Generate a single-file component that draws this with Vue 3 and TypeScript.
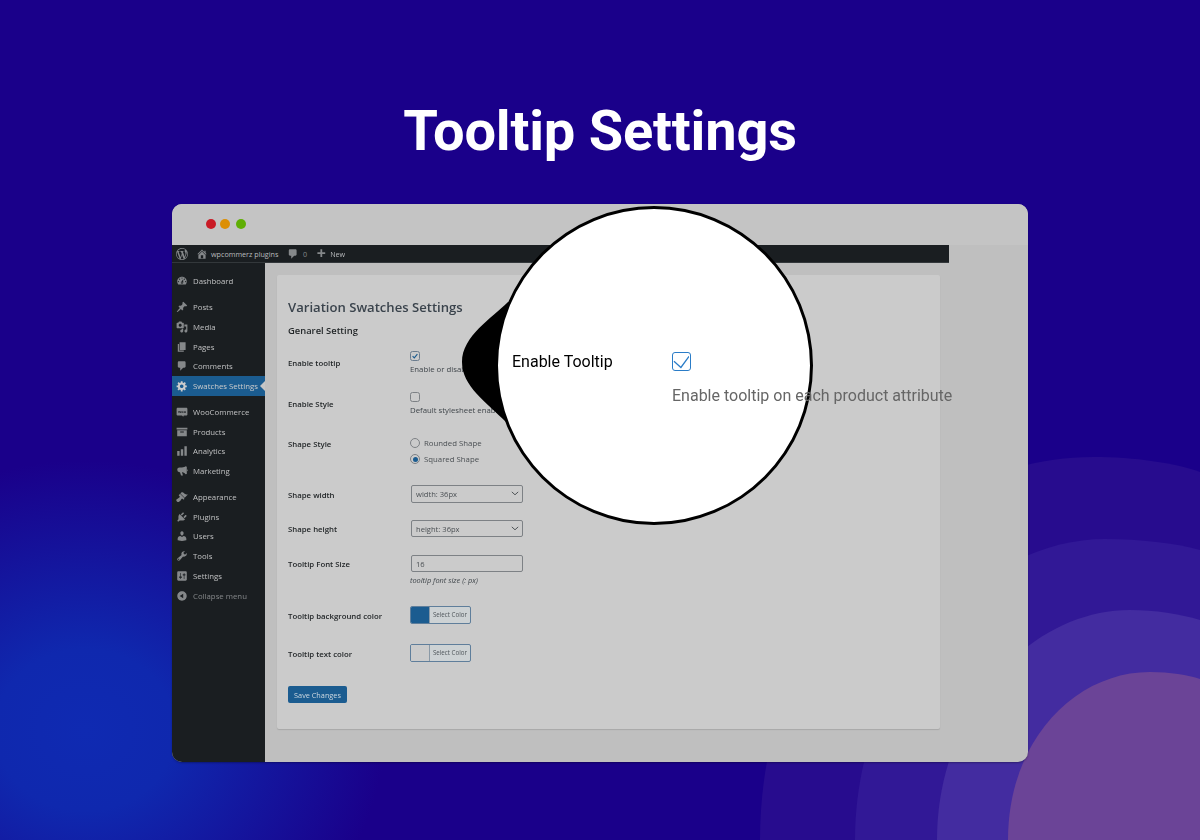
<script setup lang="ts">
interface MenuItem {
  label: string
  icon: string
  gap?: boolean
  active?: boolean
  muted?: boolean
}

const icons: Record<string, string> = {
  wp: 'M20 10c0-5.51-4.49-10-10-10C4.48 0 0 4.49 0 10c0 5.52 4.48 10 10 10 5.51 0 10-4.48 10-10zM7.78 15.37L4.37 6.22c.55-.02 1.17-.08 1.17-.08.5-.06.44-1.13-.06-1.11 0 0-1.45.11-2.37.11-.18 0-.37 0-.58-.01C4.12 2.69 6.87 1.11 10 1.11c2.33 0 4.45.87 6.05 2.34-.68-.11-1.65.39-1.65 1.58 0 .74.45 1.36.9 2.1.35.61.55 1.36.55 2.46 0 1.49-1.4 5-1.4 5l-3.03-8.37c.54-.02.82-.17.82-.17.5-.05.44-1.25-.06-1.22 0 0-1.44.12-2.38.12-.87 0-2.33-.12-2.33-.12-.5-.03-.56 1.2-.06 1.22l.92.08 1.26 3.41zM17.41 10c.24-.64.74-1.87.43-4.25.7 1.29 1.05 2.71 1.05 4.25 0 3.29-1.73 6.24-4.4 7.78.97-2.59 1.94-5.2 2.92-7.78zM6.1 18.09C3.12 16.65 1.11 13.53 1.11 10c0-1.3.23-2.48.72-3.59C3.25 10.3 4.67 14.2 6.1 18.09zm4.03-6.63l2.58 6.98c-.86.29-1.76.45-2.71.45-.79 0-1.57-.11-2.29-.33.81-2.38 1.62-4.74 2.42-7.1z',
  home: 'M16 8.5l1.53 1.53-1.06 1.06L10 4.62l-6.47 6.47-1.06-1.06L10 2.5l4 4v-2h2v4zm-6-2.46l6 5.99V18H4v-5.97zM12 17v-5H8v5h4z',
  plus: 'M17 7v3h-5v5H9v-5H4V7h5V2h3v5h5z',
  dashboard: 'M3.76 16h12.48c1.1-1.37 1.76-3.11 1.76-5 0-4.42-3.58-8-8-8s-8 3.58-8 8c0 1.89.66 3.63 1.76 5zM10 4c.55 0 1 .45 1 1s-.45 1-1 1-1-.45-1-1 .45-1 1-1zM6 6c.55 0 1 .45 1 1s-.45 1-1 1-1-.45-1-1 .45-1 1-1zm8 0c.55 0 1 .45 1 1s-.45 1-1 1-1-.45-1-1 .45-1 1-1zm-5.37 5.55L12 7v6c0 1.1-.9 2-2 2s-2-.9-2-2c0-.57.24-1.08.63-1.45zM4 10c.55 0 1 .45 1 1s-.45 1-1 1-1-.45-1-1 .45-1 1-1zm12 0c.55 0 1 .45 1 1s-.45 1-1 1-1-.45-1-1 .45-1 1-1zm-5 3c0-.55-.45-1-1-1s-1 .45-1 1 .45 1 1 1 1-.45 1-1z',
  pin: 'M10.44 3.02l1.82-1.82 6.36 6.35-1.83 1.82c-1.05-.68-2.48-.57-3.41.36l-.75.75c-.92.93-1.04 2.35-.35 3.41l-1.83 1.82-2.41-2.41-2.8 2.79c-.42.42-3.38 2.71-3.8 2.29s1.86-3.39 2.28-3.81l2.79-2.79L4.1 9.36l1.83-1.82c1.05.69 2.48.57 3.4-.36l.75-.75c.93-.92 1.05-2.35.36-3.41z',
  media: 'M13 11V4c0-.55-.45-1-1-1h-1.67L9 1H5L3.67 3H2c-.55 0-1 .45-1 1v7c0 .55.45 1 1 1h10c.55 0 1-.45 1-1zM7 4.5c1.38 0 2.5 1.12 2.5 2.5S8.38 9.5 7 9.5 4.5 8.38 4.5 7 5.62 4.5 7 4.5zM14 6h5v10.5c0 1.38-1.12 2.5-2.5 2.5S14 17.88 14 16.5s1.12-2.5 2.5-2.5c.17 0 .34.02.5.05V9h-3V6zm-4 8.05V13h2v3.5c0 1.38-1.12 2.5-2.5 2.5S7 17.88 7 16.5 8.12 14 9.5 14c.17 0 .34.02.5.05z',
  pages: 'M6 15V2h10v13H6zm-1 1h8v2H3V5h2v11z',
  comment: 'M5 2h9c1.1 0 2 .9 2 2v7c0 1.1-.9 2-2 2h-2l-5 5v-5H5c-1.1 0-2-.9-2-2V4c0-1.1.9-2 2-2z',
  gear: 'M18 12h-2.18c-.17.7-.44 1.35-.81 1.93l1.54 1.54-2.1 2.1-1.54-1.54c-.58.36-1.23.63-1.91.79V19H8v-2.18c-.68-.16-1.33-.43-1.91-.79l-1.54 1.54-2.12-2.12 1.54-1.54c-.36-.58-.63-1.23-.79-1.91H1V9.03h2.17c.16-.7.44-1.35.8-1.94L2.43 5.55l2.1-2.1 1.54 1.54c.58-.37 1.24-.64 1.93-.81V2h3v2.18c.68.16 1.33.43 1.91.79l1.54-1.54 2.12 2.12-1.54 1.54c.36.59.64 1.24.8 1.94H18V12zm-8.5 1.5c1.66 0 3-1.34 3-3s-1.34-3-3-3-3 1.34-3 3 1.34 3 3 3z',
  woo: 'M3 3h14c1.1 0 2 .9 2 2v9c0 1.1-.9 2-2 2h-4l-1 2-2-2H3c-1.1 0-2-.9-2-2V5c0-1.1.9-2 2-2z',
  products: 'M19 3H1v3h18V3zM2 7h16v10H2V7zm5 2v2h6V9H7z',
  analytics: 'M18 18V2h-4v16h4zm-6 0V7H8v11h4zm-6 0v-8H2v8h4z',
  marketing: 'M18 3v12l-2 .6C14 12.8 12 12 10 12l1.6 5.5H8.4L6.6 12H6a4 4 0 0 1 0-8h4c2.4 0 5-1 6-2zM18.5 7a2 2 0 0 1 0 3.6z',
  appearance: 'M14.48 11.06L7.41 3.99l1.5-1.5c.5-.56 2.3-.47 3.51.32 1.21.8 1.43 1.28 2.91 2.1 1.18.64 2.45 1.26 4.45.85zm-.71.71L6.7 4.7 4.93 6.47c-.39.39-.39 1.02 0 1.41l1.06 1.06c.39.39.39 1.03 0 1.42-.6.6-1.43 1.11-2.21 1.69-.35.26-.7.53-1.01.84C1.43 13.23.5 14.4.5 15.5c0 1.5 2 3 3 3 1.1 0 2.27-.93 3.61-2.27.31-.31.58-.66.84-1.01.58-.78 1.09-1.61 1.69-2.21.39-.39 1.03-.39 1.42 0l1.06 1.06c.39.39 1.02.39 1.41 0z',
  plugins: 'M13.11 4.36L9.87 7.6 8 5.73l3.24-3.24c.35-.34 1.05-.2 1.56.32.52.51.66 1.21.31 1.55zm-8 1.77l.91-1.12 9.01 9.01-1.19.84c-.71.71-2.63 1.16-3.82 1.16H6.14L4.9 17.26c-.59.59-1.54.59-2.12 0-.59-.58-.59-1.53 0-2.12l1.24-1.24v-3.88c0-1.13.4-3.19 1.09-3.89zm7.26 3.97l3.24-3.24c.34-.35 1.04-.21 1.55.31.52.51.66 1.21.31 1.55l-3.24 3.25z',
  users: 'M10 9.25c-2.27 0-2.73-3.44-2.73-3.44C7 4.02 7.82 2 9.97 2c2.16 0 2.98 2.02 2.71 3.81 0 0-.41 3.44-2.68 3.44zm0 2.57L12.72 10c2.39 0 4.52 2.33 4.52 4.53v2.49s-3.65 1.13-7.24 1.13c-3.65 0-7.24-1.13-7.24-1.13v-2.49c0-2.25 1.94-4.48 4.47-4.48z',
  tools: 'M16.68 9.77c-1.34 1.34-3.3 1.67-4.95.99l-5.41 6.52c-.99.99-2.59.99-3.58 0s-.99-2.59 0-3.57l6.52-5.42c-.68-1.65-.35-3.61.99-4.95 1.28-1.28 3.12-1.62 4.72-1.06l-2.89 2.89 2.82 2.82 2.86-2.87c.53 1.58.18 3.39-1.08 4.65zM3.81 16.21c.4.39 1.04.39 1.43 0 .4-.4.4-1.04 0-1.43-.39-.4-1.03-.4-1.43 0-.39.39-.39 1.03 0 1.43z',
  settings: 'M18 16V4c0-1.1-.9-2-2-2H4c-1.1 0-2 .9-2 2v12c0 1.1.9 2 2 2h12c1.1 0 2-.9 2-2zM8 11h1c.55 0 1 .45 1 1s-.45 1-1 1H8v1.5c0 .28-.22.5-.5.5s-.5-.22-.5-.5V13H6c-.55 0-1-.45-1-1s.45-1 1-1h1V5.5c0-.28.22-.5.5-.5s.5.22.5.5V11zm5-2h-1c-.55 0-1-.45-1-1s.45-1 1-1h1V5.5c0-.28.22-.5.5-.5s.5.22.5.5V7h1c.55 0 1 .45 1 1s-.45 1-1 1h-1v5.5c0 .28-.22.5-.5.5s-.5-.22-.5-.5V9z',
  collapse: 'M10 2.16c4.33 0 7.84 3.51 7.84 7.84s-3.51 7.84-7.84 7.84S2.16 14.33 2.16 10 5.71 2.16 10 2.16zm2 11.72V6.12L6.18 9.97z'
}

const menu: MenuItem[] = [
  { label: 'Dashboard', icon: 'dashboard' },
  { label: 'Posts', icon: 'pin', gap: true },
  { label: 'Media', icon: 'media' },
  { label: 'Pages', icon: 'pages' },
  { label: 'Comments', icon: 'comment' },
  { label: 'Swatches Settings', icon: 'gear', active: true },
  { label: 'WooCommerce', icon: 'woo', gap: true },
  { label: 'Products', icon: 'products' },
  { label: 'Analytics', icon: 'analytics' },
  { label: 'Marketing', icon: 'marketing' },
  { label: 'Appearance', icon: 'appearance', gap: true },
  { label: 'Plugins', icon: 'plugins' },
  { label: 'Users', icon: 'users' },
  { label: 'Tools', icon: 'tools' },
  { label: 'Settings', icon: 'settings' },
  { label: 'Collapse menu', icon: 'collapse', muted: true }
]
</script>

<template>
  <div class="page">
    <svg class="blobs" viewBox="0 0 1200 840" aria-hidden="true">
      <path fill="#270c8e" d="M760 840C760 620 920 457 1093 457C1135 457 1175 463 1200 472V840Z" />
      <path fill="#311896" d="M855 840C855 670 980 539 1105 539C1140 539 1175 543 1200 550V840Z" />
      <path fill="#432ca0" d="M937 840C937 710 1030 610 1130 610C1155 610 1180 614 1200 620V840Z" />
      <path fill="#6b4497" d="M1008 840C1008 740 1075 672 1150 672C1170 672 1188 675 1200 679V840Z" />
    </svg>

    <h1 class="title">Tooltip Settings</h1>

    <div class="window">
      <div class="titlebar">
        <span class="dot dot-red"></span>
        <span class="dot dot-amber"></span>
        <span class="dot dot-green"></span>
      </div>

      <div class="shot">
        <div class="adminbar">
          <svg class="bar-logo" viewBox="0 0 20 20"><path :d="icons.wp" fill-rule="evenodd" /></svg>
          <svg class="bar-icon bar-home" viewBox="0 0 20 20"><path :d="icons.home" /></svg>
          <span class="bar-site">wpcommerz plugins</span>
          <svg class="bar-icon bar-comment" viewBox="0 0 20 20"><path :d="icons.comment" /></svg>
          <span class="bar-count">0</span>
          <svg class="bar-icon bar-plus" viewBox="0 0 20 20"><path :d="icons.plus" /></svg>
          <span class="bar-new">New</span>
        </div>

        <div class="admin-body">
          <nav class="sidebar">
            <div
              v-for="item in menu"
              :key="item.label"
              class="menu-item"
              :class="{ 'has-gap': item.gap, active: item.active, muted: item.muted }"
            >
              <svg class="menu-icon" viewBox="0 0 20 20" fill-rule="evenodd">
                <path :d="icons[item.icon]" />
                <text v-if="item.icon === 'woo'" x="10" y="12" class="woo-text">woo</text>
              </svg>
              <span>{{ item.label }}</span>
            </div>
          </nav>

          <main class="content">
            <section class="card">
              <h2 class="card-title">Variation Swatches Settings</h2>
              <h3 class="card-sub">Genarel Setting</h3>

              <div class="row row-check-a">
                <label class="row-label">Enable tooltip</label>
                <div class="control">
                  <span class="check on">
                    <svg viewBox="0 0 10 10"><path d="M2 5.2l2.1 2.2L8 2.6" /></svg>
                  </span>
                  <p class="desc">Enable or disable tooltip on each product attribute</p>
                </div>
              </div>

              <div class="row row-check-b">
                <label class="row-label">Enable Style</label>
                <div class="control">
                  <span class="check"></span>
                  <p class="desc">Default stylesheet enabled for swatches</p>
                </div>
              </div>

              <div class="row row-radio">
                <label class="row-label">Shape Style</label>
                <div class="control control-radio">
                  <div class="radio-line"><span class="radio"></span>Rounded Shape</div>
                  <div class="radio-line"><span class="radio on"></span>Squared Shape</div>
                </div>
              </div>

              <div class="row row-select-a">
                <label class="row-label">Shape width</label>
                <div class="field">
                  width: 36px
                  <svg class="chev" viewBox="0 0 10 6"><path d="M1 1l4 3.6L9 1" /></svg>
                </div>
              </div>

              <div class="row row-select-b">
                <label class="row-label">Shape height</label>
                <div class="field">
                  height: 36px
                  <svg class="chev" viewBox="0 0 10 6"><path d="M1 1l4 3.6L9 1" /></svg>
                </div>
              </div>

              <div class="row row-input">
                <label class="row-label">Tooltip Font Size</label>
                <div class="control-input">
                  <div class="field">16</div>
                  <p class="hint">tooltip font size (: px)</p>
                </div>
              </div>

              <div class="row row-color-a">
                <label class="row-label">Tooltip background color</label>
                <div class="picker">
                  <span class="swatch swatch-blue"></span>
                  <span class="picker-text">Select Color</span>
                </div>
              </div>

              <div class="row row-color-b">
                <label class="row-label">Tooltip text color</label>
                <div class="picker">
                  <span class="swatch"></span>
                  <span class="picker-text">Select Color</span>
                </div>
              </div>

              <button class="save" type="button">Save Changes</button>
            </section>
          </main>
        </div>
      </div>

      <svg class="tail" viewBox="0 0 60 130" aria-hidden="true">
        <path d="M46 0C30 16 0 34 0 60C0 84 24 100 44 120L60 120V0Z" />
      </svg>
      <div class="lens">
        <span class="lens-label">Enable Tooltip</span>
        <span class="lens-check">
          <svg viewBox="0 0 17 17"><path d="M1 8.5l7.2 6.5L16.6 3.5" /></svg>
        </span>
      </div>
      <p class="lens-desc">Enable tooltip on each product attribute</p>
    </div>
  </div>
</template>

<style>
html,
body {
  margin: 0;
  background: #1a008a;
}
</style>

<style scoped>
.page {
  position: relative;
  width: 1200px;
  height: 840px;
  overflow: hidden;
  display: flex;
  flex-direction: column;
  align-items: center;
  background: radial-gradient(ellipse 300px 270px at 85px 730px, #0f2ab2 0%, #0f28ae 30%, #1a008a 100%);
  font-family: Roboto, sans-serif;
}

.blobs {
  position: absolute;
  inset: 0;
  width: 1200px;
  height: 840px;
}

.title {
  position: relative;
  margin: 95px 0 0;
  height: 73px;
  font-size: 56px;
  line-height: 73px;
  font-weight: 700;
  letter-spacing: -0.2px;
  color: #fff;
}

.window {
  position: relative;
  margin-top: 36px;
  width: 856px;
  height: 558px;
  border-radius: 10px;
  overflow: hidden;
  background: #bfbfbf;
  box-shadow: 0 1px 2px rgba(0, 0, 0, 0.3);
  flex: none;
}

.titlebar {
  height: 41px;
  box-sizing: border-box;
  padding: 0 0 1px 34px;
  display: flex;
  align-items: center;
  gap: 4px;
  background: #c4c4c4;
}

.dot {
  width: 10px;
  height: 10px;
  border-radius: 50%;
}

.dot-red {
  background: #c91b26;
}

.dot-amber {
  background: #dc8f04;
}

.dot-green {
  margin-left: 2px;
  background: #5fae04;
}

.shot {
  width: 777px;
  font-family: 'Open Sans', sans-serif;
  filter: blur(0.35px);
}

.adminbar {
  height: 18px;
  display: flex;
  align-items: center;
  background: #1a1e21;
  box-shadow: inset 0 -1px 0 #33383b;
  color: #b8babc;
  font-size: 7.2px;
  white-space: nowrap;
}

.bar-logo {
  margin-left: 4px;
  width: 12px;
  height: 12px;
  fill: #85888a;
}

.bar-icon {
  width: 12px;
  height: 12px;
  fill: #85888a;
}

.bar-home {
  margin-left: 8px;
}

.bar-site {
  margin-left: 3px;
  width: 69px;
}

.bar-comment {
  margin-left: 7px;
}

.bar-count {
  margin-left: 4px;
  color: #85888a;
}

.bar-plus {
  margin-left: 8px;
}

.bar-new {
  margin-left: 3px;
}

.admin-body {
  display: flex;
  height: 499px;
  width: 856px;
}

.sidebar {
  width: 93px;
  flex: none;
  padding-top: 8.5px;
  box-sizing: border-box;
  background: #1a1e21;
}

.menu-item {
  position: relative;
  height: 19.75px;
  display: flex;
  align-items: center;
  padding-left: 4px;
  gap: 5px;
  font-size: 7.8px;
  color: #c0c1c2;
  white-space: nowrap;
}

.menu-item.has-gap {
  margin-top: 6px;
}

.menu-item.active {
  background: #1b5c90;
  color: #cccccc;
}

.menu-item.active::after {
  content: '';
  position: absolute;
  right: 0;
  top: 5px;
  border: 5px solid transparent;
  border-right-color: #c6c6c6;
  border-left-width: 0;
}

.menu-item.muted {
  color: #85888a;
}

.menu-icon {
  width: 12px;
  height: 12px;
  flex: none;
  fill: #85888a;
}

.active .menu-icon {
  fill: #cccccc;
}

.woo-text {
  font-size: 6.5px;
  font-weight: 700;
  text-anchor: middle;
  fill: #1a1e21;
}

.content {
  flex: none;
  width: 763px;
  padding: 12px 88px 0 12px;
  box-sizing: border-box;
}

.card {
  width: 663px;
  height: 454px;
  padding: 23px 11px 0;
  box-sizing: border-box;
  background: #cbcbcb;
  border-radius: 2px;
  box-shadow: 0 1px 1px rgba(0, 0, 0, 0.12);
  color: #2c3338;
}

.card-title {
  margin: 0;
  height: 18px;
  font-size: 13.1px;
  line-height: 18px;
  font-weight: 600;
  color: #3a434c;
  white-space: nowrap;
}

.card-sub {
  margin: 8px 0 0;
  height: 14px;
  font-size: 9.4px;
  line-height: 14px;
  font-weight: 600;
  color: #232729;
  white-space: nowrap;
}

.row {
  display: flex;
  align-items: flex-start;
}

.row-check-a {
  margin-top: 12px;
  height: 41px;
}

.row-check-b {
  height: 40px;
}

.row-radio {
  height: 51px;
}

.row-select-a {
  height: 34px;
}

.row-select-b {
  height: 35px;
}

.row-input {
  height: 52px;
}

.row-color-a {
  height: 38px;
}

.row-color-b {
  height: 45px;
}

.row-label {
  width: 122px;
  flex: none;
  padding-top: 6px;
  font-size: 7.8px;
  line-height: 14px;
  font-weight: 600;
  color: #232729;
  white-space: nowrap;
}

.control {
  padding-top: 1px;
}

.check {
  display: block;
  width: 10px;
  height: 10px;
  box-sizing: border-box;
  border: 1px solid #7d8185;
  border-radius: 2.5px;
}

.check.on {
  border-color: #6b7c8e;
}

.check svg {
  display: block;
  width: 8px;
  height: 8px;
  fill: none;
  stroke: #1b5c90;
  stroke-width: 1.4;
}

.desc {
  margin: 3px 0 0;
  font-size: 7.8px;
  line-height: 11px;
  color: #3f454a;
  white-space: nowrap;
}

.control-radio {
  padding-top: 4px;
}

.radio-line {
  height: 16px;
  display: flex;
  align-items: center;
  gap: 4px;
  font-size: 7.8px;
  color: #4a4f53;
  white-space: nowrap;
}

.radio {
  width: 10px;
  height: 10px;
  box-sizing: border-box;
  border: 1px solid #7d8185;
  border-radius: 50%;
  display: flex;
  align-items: center;
  justify-content: center;
}

.radio.on::before {
  content: '';
  width: 5px;
  height: 5px;
  border-radius: 50%;
  background: #1b5c90;
}

.field {
  position: relative;
  width: 112px;
  height: 18px;
  margin: 3px 0 0 1px;
  padding-left: 4px;
  box-sizing: border-box;
  display: flex;
  align-items: center;
  border: 1px solid #7d8185;
  border-radius: 2px;
  font-size: 7.6px;
  color: #4a4f53;
}

.row-select-b .field {
  margin-top: 4px;
  height: 17px;
}

.chev {
  position: absolute;
  right: 3px;
  top: 5px;
  width: 8px;
  height: 5px;
  fill: none;
  stroke: #4a4f53;
  stroke-width: 1.2;
}

.control-input .field {
  margin-top: 4px;
  height: 17px;
}

.hint {
  margin: 3px 0 0 0;
  font-size: 7.4px;
  line-height: 11px;
  font-style: italic;
  color: #3f454a;
  white-space: nowrap;
}

.picker {
  width: 61px;
  height: 18px;
  margin-top: 3px;
  box-sizing: border-box;
  display: flex;
  align-items: stretch;
  border: 1px solid #5f7e9b;
  border-radius: 2px;
  overflow: hidden;
  background: #cdd2d4;
}

.swatch {
  width: 18px;
  background: #cbcbcb;
  border-right: 1px solid #8a99a6;
}

.swatch-blue {
  background: #1b5c90;
}

.picker-text {
  flex: 1;
  text-align: center;
  font-size: 6.2px;
  line-height: 16px;
  color: #50565b;
  white-space: nowrap;
}

.save {
  display: block;
  width: 59px;
  height: 17px;
  padding: 0;
  border: 0;
  border-radius: 2px;
  background: #1b5c90;
  color: #cdd8e0;
  font-family: inherit;
  font-size: 7.3px;
}

.tail {
  position: absolute;
  left: 290px;
  top: 98px;
  width: 60px;
  height: 130px;
  fill: #000;
}

.lens {
  position: absolute;
  left: 323px;
  top: 2px;
  width: 318px;
  height: 319px;
  box-sizing: border-box;
  border: 3px solid #000;
  border-radius: 50%;
  background: #fff;
}

.lens-label {
  position: absolute;
  left: 14px;
  top: 143px;
  font-size: 16px;
  line-height: 20px;
  color: #000;
}

.lens-check {
  position: absolute;
  left: 174px;
  top: 143px;
  width: 19px;
  height: 19px;
  box-sizing: border-box;
  border: 1.3px solid #2a7cc7;
  border-radius: 3px;
}

.lens-check svg {
  display: block;
  width: 16.4px;
  height: 16.4px;
  fill: none;
  stroke: #2a7cc7;
  stroke-width: 1.3;
}

.lens-desc {
  position: absolute;
  left: 500px;
  top: 182px;
  margin: 0;
  font-size: 16px;
  line-height: 20px;
  color: #666;
  white-space: nowrap;
}
</style>
